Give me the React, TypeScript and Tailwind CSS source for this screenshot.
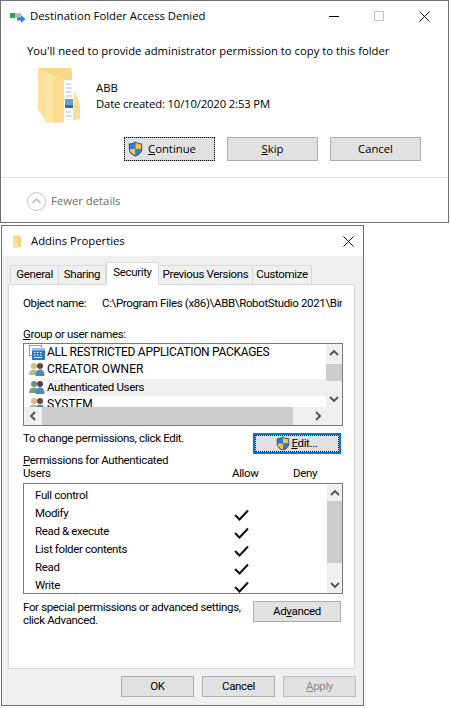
import type { ReactNode } from "react";

function Shield({ size = 15 }: { size?: number }) {
  return (
    <svg width={size} height={size + 1} viewBox="0 0 15 16" className="shrink-0">
      <path d="M7.5 0.5 C5.5 2 3 2.6 0.8 2.6 V8 C0.8 11.5 4 14.2 7.5 15.6 C11 14.2 14.2 11.5 14.2 8 V2.6 C12 2.6 9.5 2 7.5 0.5Z" fill="#1f4f8f" />
      <path d="M7.5 1.6 V8 H1.7 V3.4 C3.6 3.3 5.8 2.8 7.5 1.6Z" fill="#2f7fd0" />
      <path d="M7.5 1.6 V8 H13.3 V3.4 C11.4 3.3 9.2 2.8 7.5 1.6Z" fill="#f6c445" />
      <path d="M7.5 8 V14.6 C4.8 13.4 1.7 11.2 1.7 8Z" fill="#f6c445" />
      <path d="M7.5 8 V14.6 C10.2 13.4 13.3 11.2 13.3 8Z" fill="#2f7fd0" />
    </svg>
  );
}

function Users({ dim }: { dim?: boolean }) {
  return (
    <svg width="16" height="15" viewBox="0 0 16 15" className="shrink-0">
      <circle cx="5" cy="4" r="3" fill={dim ? "#6f8f78" : "#d8b98c"} />
      <path d="M0 13 C0 9 2.5 7.5 5 7.5 C7.5 7.5 9 9 9 13Z" fill={dim ? "#6f9f80" : "#a9c088"} />
      <circle cx="11" cy="4" r="3" fill={dim ? "#3f4a5a" : "#5a4a3f"} />
      <path d="M6.5 14 C6.5 9 9 7.5 11 7.5 C13.5 7.5 15.5 9 15.5 14Z" fill="#4f86bd" />
    </svg>
  );
}

function AppIcon() {
  return (
    <svg width="16" height="15" viewBox="0 0 16 15" className="shrink-0">
      <rect x="0.5" y="0.5" width="12" height="10" fill="#fff" stroke="#7f9fc0" />
      <rect x="3" y="3" width="13" height="12" fill="#2a77c9" />
      <rect x="3" y="3" width="13" height="2.5" fill="#9cc7ee" />
      <path d="M5 7.5h1.5M8 7.5h1.5M11 7.5h1.5M5 10h1.5M8 10h1.5M11 10h1.5M5 12.5h8" stroke="#fff" strokeWidth="1" />
    </svg>
  );
}

function Chevron({ dir }: { dir: "up" | "down" | "left" | "right" }) {
  const d = {
    up: "M1 6 L5 2 L9 6",
    down: "M1 2 L5 6 L9 2",
    left: "M6 1 L2 5 L6 9",
    right: "M2 1 L6 5 L2 9",
  }[dir];
  const vertical = dir === "up" || dir === "down";
  return (
    <svg width={vertical ? 10 : 8} height={vertical ? 8 : 10} viewBox={vertical ? "0 0 10 8" : "0 0 8 10"}>
      <path d={d} fill="none" stroke="#505050" strokeWidth="1.8" />
    </svg>
  );
}

function CheckMark() {
  return (
    <svg width="15" height="12" viewBox="0 0 15 12">
      <path d="M1 6 L5.5 10.5 L14 1.5" fill="none" stroke="#111" strokeWidth="2" />
    </svg>
  );
}

function CloseX() {
  return (
    <svg width="11" height="11" viewBox="0 0 11 11">
      <path d="M0.5 0.5 L10.5 10.5 M10.5 0.5 L0.5 10.5" stroke="#111" strokeWidth="1" />
    </svg>
  );
}

function Btn({ children, className = "" }: { children: ReactNode; className?: string }) {
  return (
    <div className={`flex items-center justify-center border border-[#adadad] bg-[#e1e1e1] ${className}`}>
      {children}
    </div>
  );
}

function FolderBig() {
  return (
    <svg width="44" height="56" viewBox="0 0 44 56" className="shrink-0">
      <path d="M1 0 H34 L35 6 V40 L43 38 V50 L24 54 Z" fill="#f5d888" />
      <path d="M27 12 H36 V53 H27 Z" fill="#fbfbfb" />
      <path d="M29 16h5M29 20h6M29 24h5M29 28h6M29 44h5M29 48h6" stroke="#a9c4dc" strokeWidth="1" />
      <path d="M28 31 H36 V37 H28 Z" fill="#6f9fc4" />
      <path d="M28 37 H36 V40 H28 Z" fill="#3d6d80" />
      <path d="M37 22 L43 37 V50 L36 53 Z" fill="#f8de96" />
      <path d="M1 0 L8 4 V54 L11 55 L1 42 Z" fill="#fce09a" />
      <path d="M7 3 L27 11 V54 L11 55 L8 54 Z" fill="#fde5a4" />
      <path d="M16 6 L27 11 V54 L16 55 Z" fill="#fbdd8f" />
    </svg>
  );
}

const permissions = [
  { name: "Full control", allow: false },
  { name: "Modify", allow: true },
  { name: "Read & execute", allow: true },
  { name: "List folder contents", allow: true },
  { name: "Read", allow: true },
  { name: "Write", allow: true },
];

function AccessDenied() {
  return (
    <div className="flex h-[223px] w-[449px] flex-col border border-[#6f6f6f] bg-white font-['Open_Sans',sans-serif] text-[11.3px] text-black">
      <div className="flex h-[30px] shrink-0 items-center pl-[9px]">
        <svg width="16" height="11" viewBox="0 0 16 11" className="mt-[2px] shrink-0">
          <rect x="0" y="1" width="11" height="5" fill="#b9b9b9" />
          <rect x="0" y="1" width="5" height="5" fill="#22b14c" />
          <path d="M7 5.5 H11 V3 L15.5 7 L11 11 V8.5 H7 Z" fill="#2f86d8" />
        </svg>
        <span className="ml-[4px]">Destination Folder Access Denied</span>
        <div className="ml-auto flex items-center pr-[18px]">
          <div className="h-px w-[10px] bg-black" />
          <div className="ml-[35px] h-[10px] w-[10px] border border-[#c4c4c4]" />
          <div className="ml-[35px] flex"><CloseX /></div>
        </div>
      </div>
      <div className="pl-[26px] pt-[10px] leading-[20px]">
        You'll need to provide administrator permission to copy to this folder
      </div>
      <div className="mt-[7px] flex items-center pl-[36px]">
        <FolderBig />
        <div className="ml-[15px] leading-[16px]">
          <div>ABB</div>
          <div className="tracking-[-0.15px]">Date created: 10/10/2020 2:53 PM</div>
        </div>
      </div>
      <div className="mt-[13px] flex gap-[12px] pl-[123px]">
        <Btn className="h-[24px] w-[91px] justify-start gap-[5px] pl-[3px] outline-1 -outline-offset-1 outline-dotted outline-black">
          <Shield />
          <span><u>C</u>ontinue</span>
        </Btn>
        <Btn className="h-[24px] w-[91px]"><span><u>S</u>kip</span></Btn>
        <Btn className="h-[24px] w-[91px]">Cancel</Btn>
      </div>
      <div className="mt-[16px] flex flex-1 items-center border-t border-[#e3e3e3] pl-[26px] pt-[2px]">
        <div className="flex h-[19px] w-[19px] items-center justify-center rounded-full border border-[#c4c4c4]">
          <svg width="9" height="6" viewBox="0 0 9 6"><path d="M0.5 5 L4.5 1 L8.5 5" fill="none" stroke="#b0b0b0" strokeWidth="1.2" /></svg>
        </div>
        <span className="ml-[5px] text-[#6d6d6d]">Fewer details</span>
      </div>
    </div>
  );
}

function VerticalBar({ thumbTop, thumbHeight, width }: { thumbTop: number; thumbHeight: number; width: string }) {
  return (
    <div className={`flex shrink-0 flex-col bg-[#f0f0f0] ${width}`}>
      <div className="flex h-[17px] shrink-0 items-center justify-center"><Chevron dir="up" /></div>
      <div className="relative flex-1">
        <div className="absolute inset-x-0 bg-[#cdcdcd]" style={{ top: thumbTop, height: thumbHeight }} />
      </div>
      <div className="flex h-[17px] shrink-0 items-center justify-center"><Chevron dir="down" /></div>
    </div>
  );
}

function UserList() {
  return (
    <div className="flex h-[83px] w-[320px] flex-col border border-[#7a7a7a] bg-white">
      <div className="flex h-[63px] overflow-hidden">
        <div className="flex-1 pl-[5px] text-[12px] leading-[17px] tracking-normal">
          <div className="flex h-[17px] items-center gap-[2px]"><AppIcon /><span className="tracking-[-0.3px]">ALL RESTRICTED APPLICATION PACKAGES</span></div>
          <div className="flex h-[17px] items-center gap-[2px]"><Users /><span>CREATOR OWNER</span></div>
          <div className="mt-px flex h-[17px] items-center gap-[2px]">
            <Users dim />
            <span className="flex h-[17px] flex-1 items-center bg-[#f0f0f0] text-[11.5px] tracking-[-0.35px]">Authenticated Users</span>
          </div>
          <div className="flex h-[17px] items-center gap-[2px]"><Users /><span>SYSTEM</span></div>
        </div>
        <VerticalBar thumbTop={3} thumbHeight={17} width="w-[16px]" />
      </div>
      <div className="flex h-[18px] items-center bg-[#f0f0f0]">
        <div className="flex w-[18px] justify-center"><Chevron dir="left" /></div>
        <div className="h-full w-[251px] bg-[#cdcdcd]" />
        <div className="ml-auto flex w-[48px] justify-center"><Chevron dir="right" /></div>
      </div>
    </div>
  );
}

function PermissionList() {
  return (
    <div className="flex h-[111px] w-[320px] border border-[#7a7a7a] bg-white">
      <div className="flex-1 overflow-hidden pl-[11px] pt-[3px]">
        {permissions.map((p) => (
          <div key={p.name} className="flex h-[18px] items-center">
            <span className="w-[199px]">{p.name}</span>
            {p.allow && <span className="mt-[2px] flex"><CheckMark /></span>}
          </div>
        ))}
      </div>
      <VerticalBar thumbTop={0} thumbHeight={62} width="w-[15px]" />
    </div>
  );
}

function Properties() {
  return (
    <div className="ml-px mt-[2px] flex h-[481px] w-[363px] flex-col border border-[#6f6f6f] bg-[#f0f0f0] font-['Roboto',sans-serif] text-[11.5px] tracking-[-0.35px] text-black">
      <div className="flex h-[30px] shrink-0 items-center bg-white pl-[10px] pr-[9px]">
        <svg width="11" height="13" viewBox="0 0 11 13">
          <path d="M1 0.5 H8 L9 3 V12 L1 12.5 Z" fill="#f3d27a" />
          <path d="M1 0.5 L6 3 V12.5 L1 12 Z" fill="#fbdf94" />
        </svg>
        <span className="ml-[8px] font-['Open_Sans',sans-serif] text-[11.3px] tracking-normal">Addins Properties</span>
        <div className="ml-auto flex"><CloseX /></div>
      </div>

      <div className="flex h-[28px] shrink-0 items-end whitespace-nowrap pl-[8px] pt-[7px]">
        <div className="flex h-[19px] w-[49px] items-center justify-center border border-b-0 border-[#d9d9d9]">General</div>
        <div className="flex h-[19px] w-[47px] items-center justify-center border border-b-0 border-l-0 border-[#d9d9d9]">Sharing</div>
        <div className="relative z-10 -mb-px flex h-[23px] w-[53px] items-start justify-center border border-b-0 border-[#d9d9d9] bg-white pt-px">Security</div>
        <div className="flex h-[19px] w-[94px] items-center justify-center border border-b-0 border-l-0 border-[#d9d9d9]">Previous Versions</div>
        <div className="flex h-[19px] w-[59px] items-center justify-center border border-b-0 border-l-0 border-[#d9d9d9]">Customize</div>
      </div>

      <div className="mx-[6px] flex h-[385px] w-[347px] shrink-0 flex-col border border-[#d9d9d9] bg-white pl-[14px]">
        <div className="mt-[11px] flex h-[16px] items-center">
          <span className="w-[79px] shrink-0">Object name:</span>
          <span className="w-[240px] overflow-hidden whitespace-nowrap">C:\Program Files (x86)\ABB\RobotStudio 2021\Bin</span>
        </div>
        <div className="mt-[14px] h-[16px] leading-[16px]"><u>G</u>roup or user names:</div>
        <div className="mt-px"><UserList /></div>
        <div className="mt-[7px] flex h-[21px] items-start">
          <span className="-mt-px w-[230px] shrink-0 leading-[13px]">To change permissions, click Edit.</span>
          <div className="flex h-[21px] w-[88px] items-center justify-center gap-px border-2 border-[#0078d7] bg-[#e1e1e1] outline-1 -outline-offset-3 outline-dotted outline-black">
            <Shield size={14} />
            <span><u>E</u>dit...</span>
          </div>
        </div>
        <div className="flex items-end leading-[13px]">
          <div className="w-[209px]"><u>P</u>ermissions for Authenticated<br />Users</div>
          <span className="w-[61px]">Allow</span>
          <span>Deny</span>
        </div>
        <div className="mt-[3px]"><PermissionList /></div>
        <div className="mt-[7px] flex items-start">
          <div className="w-[230px] leading-[13px]">For special permissions or advanced settings,<br />click Advanced.</div>
          <Btn className="h-[21px] w-[88px]"><span>Ad<u>v</u>anced</span></Btn>
        </div>
      </div>

      <div className="mt-[7px] flex gap-[8px] pl-[119px]">
        <Btn className="h-[21px] w-[73px]">OK</Btn>
        <Btn className="h-[21px] w-[73px]">Cancel</Btn>
        <Btn className="h-[21px] w-[73px] border-[#bfbfbf] bg-[#cccccc] text-[#8a8a8a]"><span><u>A</u>pply</span></Btn>
      </div>
    </div>
  );
}

export default function App() {
  return (
    <div className="h-[708px] w-[450px] overflow-hidden bg-white">
      <AccessDenied />
      <Properties />
    </div>
  );
}
